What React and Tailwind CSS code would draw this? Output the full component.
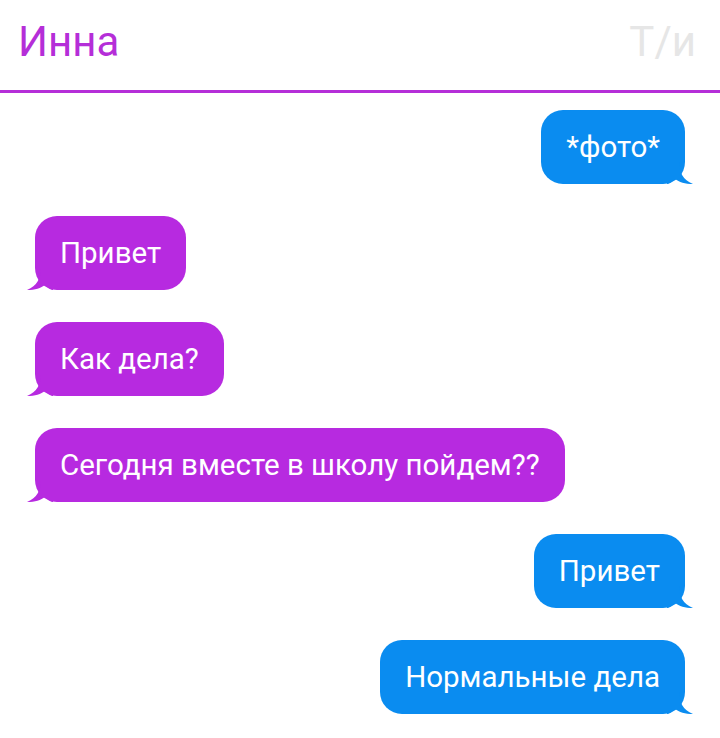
const messages = [
    { side: 'right', text: '*фото*' },
    { side: 'left', text: 'Привет' },
    { side: 'left', text: 'Как дела?' },
    { side: 'left', text: 'Сегодня вместе в школу пойдем??' },
    { side: 'right', text: 'Привет' },
    { side: 'right', text: 'Нормальные дела' },
];

function Bubble({ side, text }) {
    const isRight = side === 'right';
    return (
        <div className={`flex ${isRight ? 'justify-end' : 'justify-start'}`}>
            <div
                className={`relative h-[74px] flex items-center px-[25px] rounded-[22px] text-white text-[29.5px]
                    ${isRight ? 'bg-[#0a8cf0]' : 'bg-[#b72ae0]'}`}
            >
                <span>{text}</span>
                {/* хвостик */}
                {isRight ? (
                    <svg className="absolute -right-[8px] bottom-0 w-[26px] h-[22px]" viewBox="0 0 26 22">
                        <path d="M0 0 H12 C12 10 16 18 26 22 C18 22 12 20 8 17 C5 20 2 22 0 22 Z" fill="#0a8cf0" />
                    </svg>
                ) : (
                    <svg className="absolute -left-[8px] bottom-0 w-[26px] h-[22px]" viewBox="0 0 26 22">
                        <path d="M26 0 H14 C14 10 10 18 0 22 C8 22 14 20 18 17 C21 20 24 22 26 22 Z" fill="#b72ae0" />
                    </svg>
                )}
            </div>
        </div>
    );
}

export default function App() {
    return (
        <div className="w-[720px] h-[738px] bg-white overflow-hidden font-['Roboto','Noto_Sans',sans-serif]">
            {/* Шапка */}
            <div className="h-[93px] flex items-start justify-between px-[18px] pt-[15px] border-b-[3px] border-[#b52ed8]">
                <span className="text-[42px] leading-[54px] text-[#b52ed8]">Инна</span>
                <span className="text-[42px] leading-[54px] text-[#e6e6e6] pr-[6px]">Т/и</span>
            </div>

            {/* Сообщения */}
            <div className="flex flex-col gap-[32px] px-[35px] pt-[17px]">
                {messages.map((m, i) => (
                    <Bubble key={i} side={m.side} text={m.text} />
                ))}
            </div>
        </div>
    );
}
